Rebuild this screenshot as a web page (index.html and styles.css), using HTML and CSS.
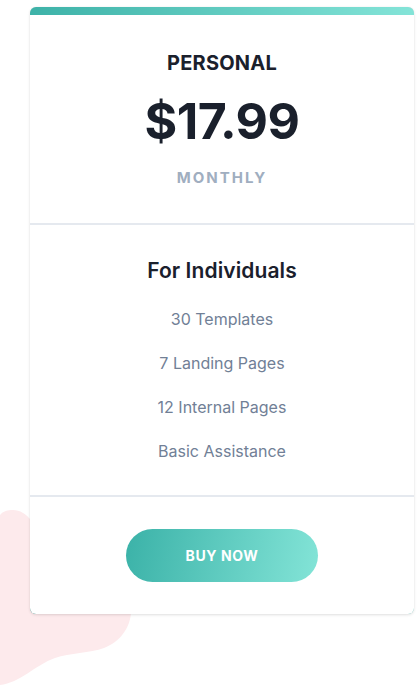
FILE: index.html
```html
<!DOCTYPE html>
<html lang="en">
<head>
<meta charset="utf-8">
<title>Pricing</title>
<link rel="stylesheet" href="styles.css">
</head>
<body>
<div class="page">
  <svg class="blob" width="140" height="190" viewBox="0 0 140 190" aria-hidden="true">
    <path d="M0 10 C3 6 8 5 13 5 C20 5 26 9 30 14 L130 60 L131 106 C131 122 120 137 104 143 C90 148 70 148 55 153 C35 160 20 178 0 180 Z" fill="#fdeaec"/>
  </svg>
  <div class="card">
    <div class="card-top">
      <h2 class="plan">PERSONAL</h2>
      <div class="price">$17.99</div>
      <div class="period">MONTHLY</div>
    </div>
    <div class="card-features">
      <h3 class="audience">For Individuals</h3>
      <ul class="features">
        <li>30 Templates</li>
        <li>7 Landing Pages</li>
        <li>12 Internal Pages</li>
        <li>Basic Assistance</li>
      </ul>
    </div>
    <div class="card-action">
      <a class="buy" href="#">BUY NOW</a>
    </div>
  </div>
</div>
</body>
</html>
```
FILE: styles.css
```css
* { box-sizing: border-box; }
html, body { margin: 0; padding: 0; background: #ffffff; }
body { font-family: Inter, "Noto Sans", sans-serif; color: #1a202c; }
.page { position: relative; width: 420px; height: 697px; padding: 7px 6px 0 30px; }
.blob { position: absolute; left: 0; top: 505px; z-index: 0; }
.card {
  position: relative; z-index: 1;
  background: #fff;
  border-radius: 6px;
  border-top: 8px solid transparent;
  background-image: linear-gradient(#fff, #fff), linear-gradient(90deg, #3db2a8, #84e4d8);
  background-origin: border-box;
  background-clip: padding-box, border-box;
  box-shadow: 0 1px 3px rgba(0,0,0,0.12), 0 0 1px rgba(0,0,0,0.08);
  display: flex; flex-direction: column;
}
.card-top {
  display: flex; flex-direction: column; align-items: center;
  padding: 36px 0 35px;
  border-bottom: 2px solid #e5e9ef;
}
.plan { margin: 0; font-size: 20px; font-weight: 700; line-height: 24px; letter-spacing: 0.2px; color: #1a202c; }
.price { margin-top: 16px; font-size: 50px; font-weight: 700; line-height: 60px; letter-spacing: -0.5px; color: #1a202c; }
.period { margin-top: 17px; font-size: 15px; font-weight: 700; line-height: 20px; letter-spacing: 2px; color: #a0aec0; }
.card-features {
  display: flex; flex-direction: column; align-items: center;
  padding: 34px 0 22px;
  border-bottom: 2px solid #e5e9ef;
}
.audience { margin: 0; font-size: 21px; font-weight: 600; line-height: 24px; letter-spacing: 0.1px; color: #1a202c; }
.features { list-style: none; margin: 14px 0 0; padding: 0; display: flex; flex-direction: column; align-items: center; }
.features li { font-size: 16px; line-height: 44px; color: #718096; }
.card-action { display: flex; justify-content: center; padding: 32px 0 32px; }
.buy {
  display: flex; align-items: center; justify-content: center;
  width: 192px; height: 53px; border-radius: 27px;
  background: linear-gradient(100deg, #3bb2a8, #83e4d7);
  color: #fff; font-size: 14px; font-weight: 700; letter-spacing: 0.6px; text-decoration: none;
}
```
